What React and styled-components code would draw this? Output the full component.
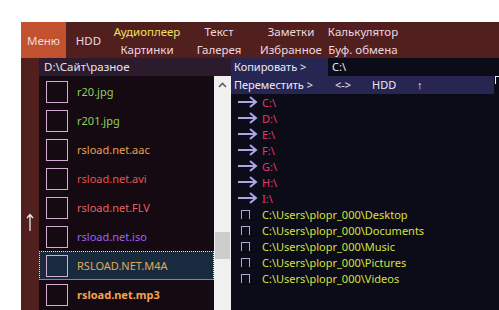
import styled, { createGlobalStyle } from "styled-components";

const GlobalStyle = createGlobalStyle`
  body {
    margin: 0;
    padding: 0;
    background: #ffffff;
    font-family: "Noto Sans", "Open Sans", sans-serif;
  }
`;

const files = [
  { name: "r20.jpg", color: "#8fd060" },
  { name: "r201.jpg", color: "#8fd060" },
  { name: "rsload.net.aac", color: "#e8a050" },
  { name: "rsload.net.avi", color: "#e85050" },
  { name: "rsload.net.FLV", color: "#e86060" },
  { name: "rsload.net.iso", color: "#9c62f2" },
  { name: "RSLOAD.NET.M4A", color: "#e0a858", selected: true },
  { name: "rsload.net.mp3", color: "#f4a450", bold: true },
];

const drives = ["C:\\", "D:\\", "E:\\", "F:\\", "G:\\", "H:\\", "I:\\"];
const folders = ["Desktop", "Documents", "Music", "Pictures", "Videos"];

const Arrow = () => (
  <svg width="22" height="12" viewBox="0 0 22 12">
    <path
      d="M1 6 H19 M13 1 L19 6 L13 11"
      fill="none"
      stroke="#a8a8e8"
      strokeWidth="2"
    />
  </svg>
);

const App = () => {
  return (
    <Page>
      <GlobalStyle />
      <Window>
        <MenuBar>
          <MenuButton>Меню</MenuButton>
          <HddItem>HDD</HddItem>
          <MenuGrid>
            <MenuItem $accent>Аудиоплеер</MenuItem>
            <MenuItem>Текст</MenuItem>
            <MenuItem>Заметки</MenuItem>
            <MenuItem>Калькулятор</MenuItem>
            <MenuItem>Картинки</MenuItem>
            <MenuItem>Галерея</MenuItem>
            <MenuItem>Избранное</MenuItem>
            <MenuItem>Буф. обмена</MenuItem>
          </MenuGrid>
        </MenuBar>

        <Body>
          <Sidebar>
            <svg width="8" height="18" viewBox="0 0 8 18">
              <path d="M4 1.5 V18 M1 5 L4 1.5 L7 5" fill="none" stroke="#f0e8f0" strokeWidth="1.3" />
            </svg>
          </Sidebar>

          <LeftPane>
            <PathBar>D:\Сайт\разное</PathBar>
            <ListArea>
              <FileList>
                {files.map((f) => (
                  <FileRow key={f.name} $selected={f.selected}>
                    <Check />
                    <FileName $color={f.color} $bold={f.bold}>
                      {f.name}
                    </FileName>
                  </FileRow>
                ))}
              </FileList>
              <Scrollbar>
                <ScrollUp>
                  <svg width="9" height="6" viewBox="0 0 9 6">
                    <path d="M1 5 L4.5 1.5 L8 5" fill="none" stroke="#606060" strokeWidth="1.6" />
                  </svg>
                </ScrollUp>
                <Thumb />
              </Scrollbar>
            </ListArea>
          </LeftPane>

          <RightPane>
            <TopRow>
              <CopyButton>Копировать &gt;</CopyButton>
              <PathInput>C:\</PathInput>
            </TopRow>
            <ActionRow>
              <ActionBar>
                <ActionItem $w={101}>Переместить &gt;</ActionItem>
                <ActionItem $w={37}>&lt;-&gt;</ActionItem>
                <ActionItem $w={45}>HDD</ActionItem>
                <ActionItem>↑</ActionItem>
              </ActionBar>
              <EdgeMark />
            </ActionRow>
            <DriveList>
              {drives.map((d) => (
                <DriveRow key={d}>
                  <IconCell>
                    <Arrow />
                  </IconCell>
                  <DriveName>{d}</DriveName>
                </DriveRow>
              ))}
              {folders.map((f) => (
                <DriveRow key={f}>
                  <IconCell>
                    <SmallBox />
                  </IconCell>
                  <FolderName>C:\Users\plopr_000\{f}</FolderName>
                </DriveRow>
              ))}
            </DriveList>
          </RightPane>
        </Body>
      </Window>
    </Page>
  );
};

const Page = styled.div`
  padding: 22px 0 0 21px;
  height: 310px;
  box-sizing: border-box;
  overflow: hidden;
`;

const Window = styled.div`
  display: flex;
  flex-direction: column;
  width: 478px;
  height: 288px;
  overflow: hidden;
  font-size: 11px;
`;

const MenuBar = styled.div`
  display: flex;
  height: 36px;
  background: #521f1f;
  color: #ead8e0;
  font-size: 11.5px;
`;

const MenuButton = styled.div`
  width: 45px;
  display: flex;
  align-items: center;
  justify-content: center;
  background: #c1512f;
  color: #f0dcd8;
`;

const HddItem = styled.div`
  width: 45px;
  display: flex;
  align-items: center;
  justify-content: center;
`;

const MenuGrid = styled.div`
  display: grid;
  grid-template-columns: repeat(4, 72px);
  grid-template-rows: 18px 18px;
`;

const MenuItem = styled.div`
  display: flex;
  align-items: center;
  justify-content: center;
  white-space: nowrap;
  color: ${(p) => (p.$accent ? "#f0e060" : "#ead8e0")};
`;

const Body = styled.div`
  display: flex;
  flex: 1;
  min-height: 0;
`;

const Sidebar = styled.div`
  width: 18px;
  background: #521f1f;
  display: flex;
  justify-content: center;
  align-items: flex-start;
  padding-top: 155px;
  box-sizing: border-box;
`;

const LeftPane = styled.div`
  width: 192px;
  display: flex;
  flex-direction: column;
`;

const PathBar = styled.div`
  height: 18px;
  line-height: 18px;
  background: #2b1b2d;
  color: #ece4ec;
  padding-left: 5px;
  font-size: 11.5px;
`;

const ListArea = styled.div`
  display: flex;
  flex: 1;
  min-height: 0;
`;

const FileList = styled.div`
  width: 175px;
  background: #150a11;
  padding-top: 1px;
  overflow: hidden;
`;

const FileRow = styled.div`
  display: flex;
  align-items: center;
  height: 29px;
  box-sizing: border-box;
  padding-left: ${(p) => (p.$selected ? "6px" : "7px")};
  background: ${(p) => (p.$selected ? "#182b3e" : "transparent")};
  border: ${(p) => (p.$selected ? "1px dotted #d8e4ec" : "none")};
  border-bottom: ${(p) => (p.$selected ? "1px solid #20a8e0" : "none")};
`;

const Check = styled.div`
  width: 22px;
  height: 22px;
  box-sizing: border-box;
  border: 1px solid #d4aed0;
  margin-right: 9px;
  flex-shrink: 0;
`;

const FileName = styled.span`
  color: ${(p) => p.$color};
  font-weight: ${(p) => (p.$bold ? 700 : 400)};
  white-space: nowrap;
`;

const Scrollbar = styled.div`
  width: 17px;
  background: #f0f0f0;
  display: flex;
  flex-direction: column;
  align-items: center;
`;

const ScrollUp = styled.div`
  height: 17px;
  display: flex;
  align-items: center;
  justify-content: center;
`;

const Thumb = styled.div`
  width: 15px;
  height: 27px;
  margin-top: 139px;
  background: #cdcdcd;
`;

const RightPane = styled.div`
  flex: 1;
  display: flex;
  flex-direction: column;
  background: #0c0b18;
`;

const TopRow = styled.div`
  display: flex;
  height: 18px;
  line-height: 18px;
`;

const CopyButton = styled.div`
  width: 97px;
  background: #272652;
  color: #ece8f4;
  padding-left: 3px;
  box-sizing: border-box;
  white-space: nowrap;
`;

const PathInput = styled.div`
  flex: 1;
  color: #eceaf4;
  padding-left: 4px;
`;

const ActionRow = styled.div`
  display: flex;
  height: 18px;
`;

const ActionBar = styled.div`
  flex: 1;
  display: flex;
  background: #272652;
  color: #ece8f4;
  line-height: 17px;
  padding-left: 3px;
`;

const ActionItem = styled.span`
  width: ${(p) => (p.$w ? `${p.$w}px` : "auto")};
  white-space: nowrap;
`;

const EdgeMark = styled.div`
  width: 4px;
  margin-left: 1px;
  height: 8px;
  border-left: 1px solid #e0f0ff;
  border-top: 1px solid #e0f0ff;
  box-sizing: border-box;
`;

const DriveList = styled.div`
  display: flex;
  flex-direction: column;
`;

const DriveRow = styled.div`
  display: flex;
  align-items: center;
  height: 16px;
`;

const IconCell = styled.div`
  width: 31px;
  display: flex;
  align-items: center;
  justify-content: center;
  padding-left: 2px;
  box-sizing: border-box;
`;

const DriveName = styled.span`
  color: #e83a62;
`;

const SmallBox = styled.div`
  width: 9px;
  height: 9px;
  box-sizing: border-box;
  border: 1px solid #a8a8e0;
  border-bottom: none;
  margin-right: 4px;
`;

const FolderName = styled.span`
  color: #d4e23c;
  white-space: nowrap;
`;

export default App;
